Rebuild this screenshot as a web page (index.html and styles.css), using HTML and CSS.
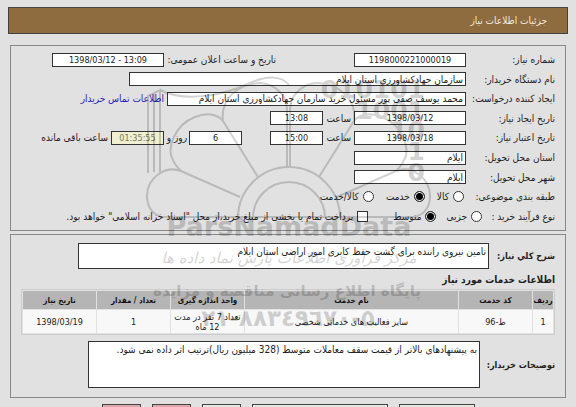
FILE: index.html
```html
<!DOCTYPE html>
<html lang="fa" dir="rtl">
<head>
  <meta charset="UTF-8">
  <title>جزئیات اطلاعات نیاز</title>
  <link rel="stylesheet" href="styles.css">
</head>
<body>

<header class="title-bar">جزئیات اطلاعات نیاز</header>

<form class="page-form">

<!-- Need details -->
<section class="panel details">
  <div class="row">
    <label class="name" for="need-no">شماره نیاز:</label>
    <input class="field medium number" id="need-no" type="text" value="1198000221000019">
    <label class="announce" for="announce">تاریخ و ساعت اعلان عمومی:</label>
    <input class="field medium number" id="announce" type="text" dir="ltr" value="1398/03/12 - 13:09">
  </div>
  <div class="row">
    <label class="name" for="org">نام دستگاه خریدار:</label>
    <input class="field full" id="org" type="text" value="سازمان جهادکشاورزی استان ایلام">
  </div>
  <div class="row">
    <label class="name" for="creator">ایجاد کننده درخواست:</label>
    <input class="field long" id="creator" type="text" value="محمد یوسف صفی پور مسئول خرید سازمان جهادکشاورزی استان ایلام">
    <a class="contact" href="#">اطلاعات تماس خریدار</a>
  </div>
  <div class="row">
    <label class="name" for="created">تاریخ ایجاد نیاز:</label>
    <input class="field medium number" id="created" type="text" value="1398/03/12">
    <label class="hour" for="created-hour">ساعت</label>
    <input class="field short number" id="created-hour" type="text" value="13:08">
  </div>
  <div class="row">
    <label class="name" for="valid">تاریخ اعتبار نیاز:</label>
    <input class="field medium number" id="valid" type="text" value="1398/03/18">
    <label class="hour" for="valid-hour">ساعت</label>
    <input class="field short number" id="valid-hour" type="text" value="15:00">
    <input class="field short number days" id="days" type="text" value="6">
    <label class="day" for="days">روز و</label>
    <input class="field short number timer" id="timer" type="text" value="01:35:55">
    <label class="remain" for="timer">ساعت باقی مانده</label>
  </div>
  <div class="row">
    <label class="name" for="province">استان محل تحویل:</label>
    <input class="field medium start" id="province" type="text" value="ایلام">
  </div>
  <div class="row">
    <label class="name" for="city">شهر محل تحویل:</label>
    <input class="field medium start" id="city" type="text" value="ایلام">
  </div>
  <div class="row choices">
    <span class="name">طبقه بندی موضوعی:</span>
    <label class="choice"><input type="radio" name="subject">کالا</label>
    <label class="choice"><input type="radio" name="subject" checked>خدمت</label>
    <label class="choice"><input type="radio" name="subject">کالا/خدمت</label>
  </div>
  <div class="row choices process">
    <span class="name">نوع فرآیند خرید :</span>
    <label class="choice"><input type="radio" name="process">جزیی</label>
    <label class="choice"><input type="radio" name="process" checked>متوسط</label>
    <label class="choice pay"><input type="checkbox">پرداخت تمام یا بخشی از مبلغ خرید،از محل "اسناد خزانه اسلامی" خواهد بود.</label>
  </div>
</section>

<!-- Services -->
<section class="panel services">
  <div class="text-row summary">
    <label for="summary">شرح کلي نیاز:</label>
    <textarea id="summary">تامین نیروی راننده برای گشت حفظ کابری امور اراضی استان ایلام</textarea>
  </div>
  <h2>اطلاعات خدمات مورد نیاز</h2>
  <table>
    <colgroup>
      <col class="c-row"><col class="c-code"><col><col class="c-unit"><col class="c-unit"><col class="c-unit">
    </colgroup>
    <thead>
      <tr><th>ردیف</th><th>کد خدمت</th><th>نام خدمت</th><th>واحد اندازه گیری</th><th>تعداد / مقدار</th><th>تاریخ نیاز</th></tr>
    </thead>
    <tbody>
      <tr><td>1</td><td>ط-96</td><td>سایر فعالیت های خدماتی شخصی</td><td>تعداد 7 نفر در مدت 12 ماه</td><td>1</td><td>1398/03/19</td></tr>
    </tbody>
  </table>
  <div class="text-row notes">
    <label for="notes">توضیحات خریدار:</label>
    <textarea id="notes">به پیشنهادهای بالاتر از قیمت سقف معاملات متوسط (328 میلیون ریال)ترتیب اثر داده نمی شود.</textarea>
  </div>
</section>

<div class="actions">
  <button type="button" class="w-mid"></button>
  <button type="button" class="w-big"></button>
  <button type="button"></button>
  <button type="button" class="red"></button>
  <button type="button" class="red"></button>
</div>

</form>

<!-- Watermark -->
<svg class="watermark" viewBox="140 70 296 264" width="296" height="264">
  <g class="lines">
    <path id="half" d="M240 197 L181 171 C165 165 147 178 147 196 C147 206 152 214 160 216 M258 177 L223 121 C217 113 205 113 195 117 C174 125 166 150 173 160 C175 165 178 168 181 171 M223 121 C220 98 240 83 260 83 C275 84 287 95 287 110 V168"/>
    <use href="#half" transform="matrix(-1 0 0 1 577 0)"/>
    <path d="M238 218 A51 51 0 1 1 340 218 M253 218 A36 36 0 1 1 325 218 M160 217 H418"/>
    <path d="M148 173 V96 L160 90 V172 M154 172 V94 M160 90 C185 103 225 95 250 83 C268 75 282 76 289 85"/>
  </g>
  <g class="digits">
    <text x="425" y="98">010101</text>
    <text x="425" y="119">1001</text>
    <text x="425" y="139">10</text>
    <text x="425" y="160">1</text>
    <text x="425" y="181">0</text>
  </g>
  <text class="brand" x="289" y="236">ParsNamadData</text>
  <text class="slogan" x="289" y="263">مرکز فرآوری اطلاعات پارس نماد داده ها</text>
  <text class="site" x="287" y="296">پایگاه اطلاع رسانی مناقصه و مزایده</text>
  <text class="phone" x="288" y="326">۲۱-۸۸۳٤۹٦۷۰-۵</text>
</svg>

</body>
</html>
```
FILE: styles.css
```css
* {
  box-sizing: border-box;
}

body {
  position: relative;
  height: 100vh;
  margin: 0;
  padding: 7px 8px 0;
  overflow: hidden;
  background: #e1e1e1;
  color: #222;
  font-family: "DejaVu Sans Condensed", "DejaVu Sans", Tahoma, sans-serif;
  font-size: 10px;
}

input, textarea, button {
  margin: 0;
  font-family: inherit;
  font-size: inherit;
  color: inherit;
}

.title-bar {
  display: flex;
  align-items: center;
  height: 27px;
  padding: 0 20px;
  border: 1px solid #444;
  background: #8f6c40;
  color: #f3ebdf;
}

.page-form {
  padding: 11px 2px 0;
}

.panel {
  border: 1px solid #888;
  padding: 4px 10px;
}

/* details */
.details {
  display: grid;
  grid-auto-rows: 1fr;
  min-height: 186px;
}

.row {
  display: flex;
  align-items: center;
  white-space: nowrap;
}

.row .name {
  width: 89px;
  flex: none;
}

.field {
  height: 14px;
  flex: none;
  padding: 0 2px;
  border: 1px solid #333;
  background: #fff;
  text-align: center;
}

.number { font-size: 9px; }

.medium { width: 112px; }
.short { width: 53px; }
.full { width: 337px; text-align: start; }
.long { width: 299px; text-align: start; }
.start { text-align: start; }

.announce {
  width: 190px;
  padding-right: 78px;
}

.contact {
  margin-right: 3px;
  color: #2a22b8;
  text-decoration: none;
}

.hour {
  width: 31px;
  padding-right: 3px;
}

.days { margin-right: 28px; }

.day {
  width: 25px;
  padding-right: 2px;
}

.timer {
  background: #f0f0d0;
  color: #77775c;
}

.remain { margin-right: 3px; }

.choice {
  display: flex;
  align-items: center;
  gap: 4px;
  margin-left: 12px;
}

.choices .name { width: 91px; }
.process .name { width: 73px; }
.process .choice { margin-left: 10px; }
.process .pay { margin-right: 15px; }

.choice input {
  appearance: none;
  width: 11px;
  height: 11px;
  border: 1px solid #333;
  background: #fff;
}

.choice input[type="radio"] {
  border-radius: 50%;
}

.choice input:checked {
  background: #000;
  box-shadow: inset 0 0 0 1px #fff;
}

/* services */
.services {
  margin-top: 3px;
  padding: 8px 10px 9px;
}

.text-row {
  display: flex;
  align-items: center;
}

.text-row label, h2 {
  font-weight: bold;
  white-space: nowrap;
}

.text-row label {
  flex: none;
  font-size: 9px;
}

.text-row textarea {
  flex: 1;
  resize: none;
  padding: 2px;
  border: 1px solid #333;
  background: #fff;
  overflow: hidden;
}

.summary label { width: 66px; }
.summary textarea { height: 26px; margin-left: 57px; }
.notes label { width: 75px; }
.notes textarea { height: 47px; margin-left: 67px; }

h2 {
  margin: 3px 0 2px;
  font-size: 10px;
  line-height: 15px;
}

table {
  width: 100%;
  margin-bottom: 6px;
  table-layout: fixed;
  border: 1px solid #ccc;
  border-spacing: 1px;
  font-size: 9px;
  text-align: center;
}

.c-row { width: 20px; }
.c-code { width: 73px; }
.c-unit { width: 73px; }

th {
  height: 18px;
  padding: 0;
  background: #b5b5b5;
  color: #111;
  font-size: 8px;
}

td {
  height: 23px;
  padding: 0 2px;
  background: #f8f8f8;
  line-height: 10px;
}

.actions {
  display: flex;
  justify-content: center;
  gap: 11px;
  margin-top: 6px;
}

.actions button {
  width: 39px;
  height: 22px;
  border: 1px solid #444;
  background: #e3e8e0;
}

.actions .w-mid { width: 76px; }
.actions .w-big { width: 136px; }
.actions .red { background: #dba9a9; }

/* watermark */
.watermark {
  position: absolute;
  top: 70px;
  left: calc(50% - 148px);
  opacity: 0.17;
  pointer-events: none;
}

.lines {
  fill: none;
  stroke: #000;
  stroke-width: 2;
}

.digits, .brand {
  direction: ltr;
  font-family: "DejaVu Sans", sans-serif;
  font-weight: bold;
}

.digits {
  font-size: 25px;
  text-anchor: end;
}

.brand {
  font-size: 27px;
  text-anchor: middle;
}

.slogan, .site, .phone {
  text-anchor: middle;
  font-family: "DejaVu Sans", sans-serif;
}

.slogan {
  font-size: 15px;
  font-style: italic;
}

.site {
  font-size: 15px;
  font-weight: bold;
}

.phone {
  font-size: 23px;
  font-weight: bold;
  direction: ltr;
  unicode-bidi: bidi-override;
}
```
